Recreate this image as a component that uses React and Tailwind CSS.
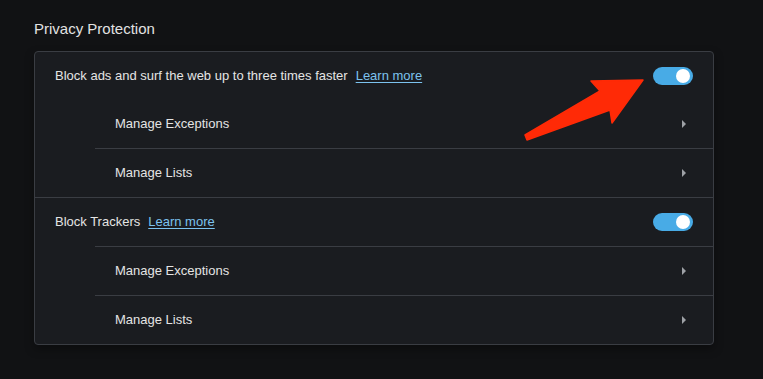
import React from "react";

function Toggle() {
  return (
    <div className="w-[40px] h-[18px] rounded-full bg-[#48abe6] flex items-center justify-end pr-[3px]">
      <div className="w-[14px] h-[14px] rounded-full bg-white" />
    </div>
  );
}

function Chevron() {
  return <div className="w-0 h-0 border-y-[4px] border-y-transparent border-l-[4px] border-l-[#9ea1a6]" />;
}

function HeaderRow({ label, divider }) {
  return (
    <div className={`flex items-center justify-between pl-5 pr-5 ${divider ? "border-t border-[#3a3d43] h-[49px]" : "h-[47px]"}`}>
      <div className="text-[13px] text-[#e4e4e4]">
        {label}
        <a className="ml-[8px] text-[#7cc2ee] underline underline-offset-2 decoration-1" href="#">Learn more</a>
      </div>
      <Toggle />
    </div>
  );
}

function SubRow({ label, visible = true }) {
  return (
    <div className={`ml-[60px] h-[49px] border-t ${visible ? "border-[#3a3d43]" : "border-transparent"} flex items-center justify-between pl-5 pr-[27px]`}>
      <span className="text-[13px] text-[#e4e4e4]">{label}</span>
      <Chevron />
    </div>
  );
}

export default function App() {
  return (
    <div className="relative w-[763px] h-[379px] bg-[#111214] overflow-hidden pt-[19px] pl-[34px]" style={{ fontFamily: '"Liberation Sans", Arial, sans-serif' }}>
      <div className="text-[15px] leading-[20px] text-[#e2e2e2] mb-3">Privacy Protection</div>
      <div className="w-[680px] rounded-[4px] border border-[#3a3d43] bg-[#1a1c20] shadow-[0_4px_10px_rgba(0,0,0,0.35)]">
        <HeaderRow label="Block ads and surf the web up to three times faster" />
        <SubRow label="Manage Exceptions" visible={false} />
        <SubRow label="Manage Lists" />
        <HeaderRow label="Block Trackers" divider />
        <SubRow label="Manage Exceptions" />
        <SubRow label="Manage Lists" />
      </div>
      <svg className="absolute left-0 top-0 pointer-events-none" width="763" height="379" viewBox="0 0 763 379">
        <polygon
          points="643,80 591,81 600,91 525,135 527,140 610,110 612,123"
          fill="#ff2a06"
          stroke="#ff2a06"
          strokeWidth="1.5"
          strokeLinejoin="round"
        />
      </svg>
    </div>
  );
}
